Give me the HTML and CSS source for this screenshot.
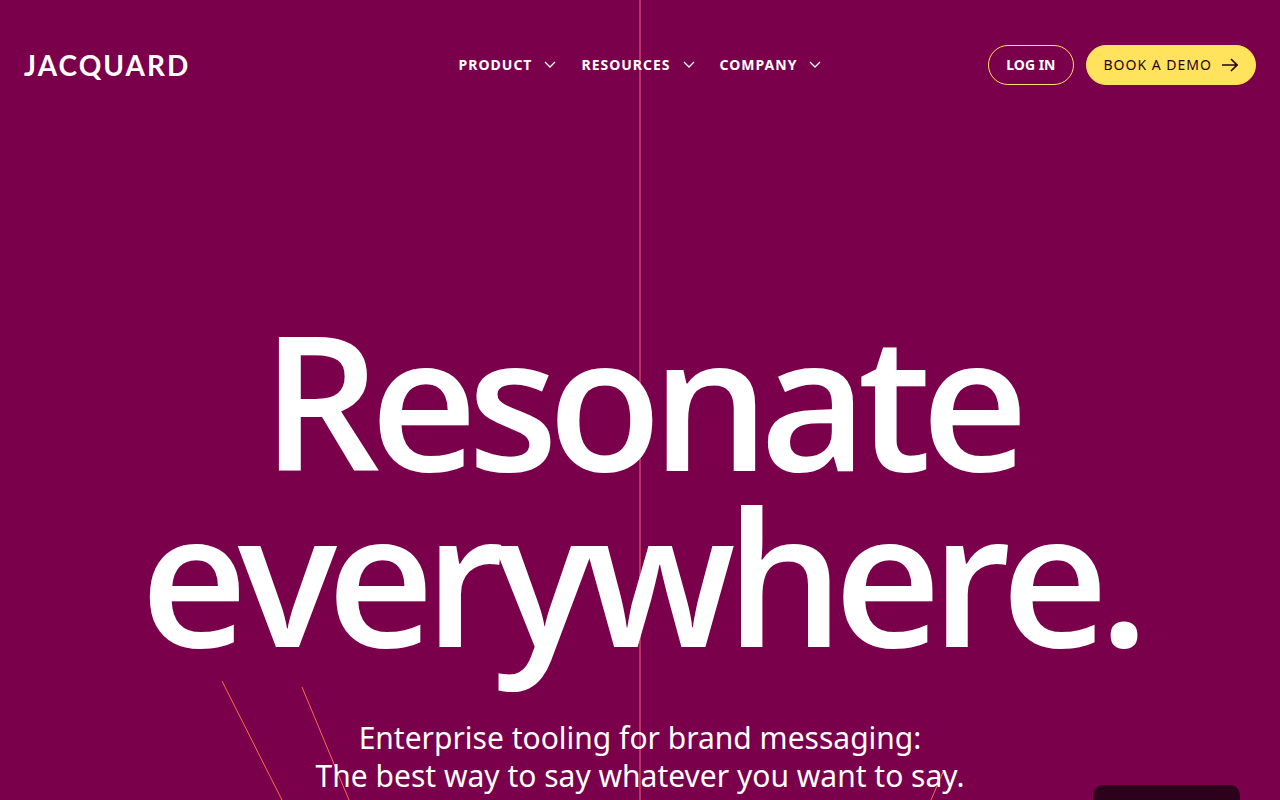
FILE: index.html
```html
<!DOCTYPE html>
<html lang="en">
  <head>
    <meta charset="UTF-8">
    <meta name="viewport" content="width=device-width, initial-scale=1">
    <title>Jacquard</title>
    <link rel="stylesheet" href="styles.css">
  </head>
  <body>
    <!-- background threads -->
    <svg class="threads" viewBox="0 0 1280 800" preserveAspectRatio="xMidYMin slice" aria-hidden="true">
      <path class="thread-main" d="M640 0V800" />
      <path d="M222 681L282 800M302 687L349 800M943 772L931 800" />
    </svg>

    <header class="header">
      <a class="logo" href="#">JACQUARD</a>
      <nav class="nav">
        <button class="nav-item">PRODUCT
          <svg class="chevron" viewBox="0 0 12 8"><path d="M1 1L6 6L11 1" /></svg>
        </button>
        <button class="nav-item">RESOURCES
          <svg class="chevron" viewBox="0 0 12 8"><path d="M1 1L6 6L11 1" /></svg>
        </button>
        <button class="nav-item">COMPANY
          <svg class="chevron" viewBox="0 0 12 8"><path d="M1 1L6 6L11 1" /></svg>
        </button>
      </nav>
      <div class="actions">
        <a class="button login" href="#">LOG IN</a>
        <a class="button demo" href="#">BOOK A DEMO
          <svg class="arrow" viewBox="0 0 16 14"><path d="M0 7H15M9 1L15 7L9 13" /></svg>
        </a>
      </div>
    </header>

    <main class="hero">
      <h1 class="title">Resonate<br>everywhere.</h1>
      <p class="subtitle">Enterprise tooling for brand messaging:<br>The best way to say whatever you want to say.</p>
    </main>

    <div class="widget"></div>
  </body>
</html>
```

FILE: styles.css
```css
* {
  box-sizing: border-box;
}

body {
  margin: 0;
  min-height: 100vh;
  overflow: hidden;
  background-color: #7a004b;
  color: #fff;
  font-family: "Segoe UI", "Noto Sans", "Open Sans", sans-serif;
}

.threads {
  position: absolute;
  top: 0;
  left: 0;
  width: 100%;
  height: 100%;
  z-index: -1;
  fill: none;
  stroke: #ff6a55;
  stroke-width: 1;
}

.thread-main {
  stroke: #b93360;
  stroke-width: 2;
}

.header {
  display: grid;
  grid-template-columns: 1fr auto 1fr;
  align-items: center;
  padding: 45px 24px 0;
}

.logo {
  color: #fff;
  font-family: Lato, sans-serif;
  font-size: 28px;
  font-weight: 700;
  line-height: 38px;
  letter-spacing: 2px;
  text-decoration: none;
}

.nav {
  display: flex;
  gap: 25px;
}

.nav-item {
  display: flex;
  align-items: center;
  gap: 12px;
  padding: 0;
  border: none;
  background: none;
  color: #fff;
  font: inherit;
  font-size: 14px;
  font-weight: 700;
  line-height: 40px;
  letter-spacing: 1px;
  cursor: pointer;
}

.chevron {
  width: 12px;
  height: 8px;
  fill: none;
  stroke: #fff;
  stroke-width: 1.3;
}

.actions {
  display: flex;
  justify-content: flex-end;
  gap: 12px;
}

.button {
  display: flex;
  align-items: center;
  gap: 10px;
  padding: 0 17px;
  border: 1px solid #ffe35d;
  border-radius: 20px;
  font-size: 14px;
  line-height: 38px;
  white-space: nowrap;
  text-decoration: none;
}

.login {
  color: #fff;
  font-weight: 700;
}

.demo {
  background-color: #ffe35d;
  color: #24001a;
  letter-spacing: 1px;
}

.arrow {
  width: 16px;
  height: 14px;
  fill: none;
  stroke: #24001a;
  stroke-width: 1.6;
}

.hero {
  padding-top: 226px;
  text-align: center;
}

.title {
  margin: 0;
  font-family: "Segoe UI", "Open Sans", "Noto Sans", sans-serif;
  font-size: 186px;
  font-weight: 600;
  line-height: 176px;
  letter-spacing: -10px;
}

.subtitle {
  margin: 56px 0 0;
  font-size: 30px;
  line-height: 38px;
}

/* chat launcher peeking from the bottom edge */
.widget {
  position: fixed;
  right: 40px;
  bottom: 0;
  width: 147px;
  height: 15px;
  border-radius: 10px 10px 0 0;
  background-color: #2d001c;
}
```
